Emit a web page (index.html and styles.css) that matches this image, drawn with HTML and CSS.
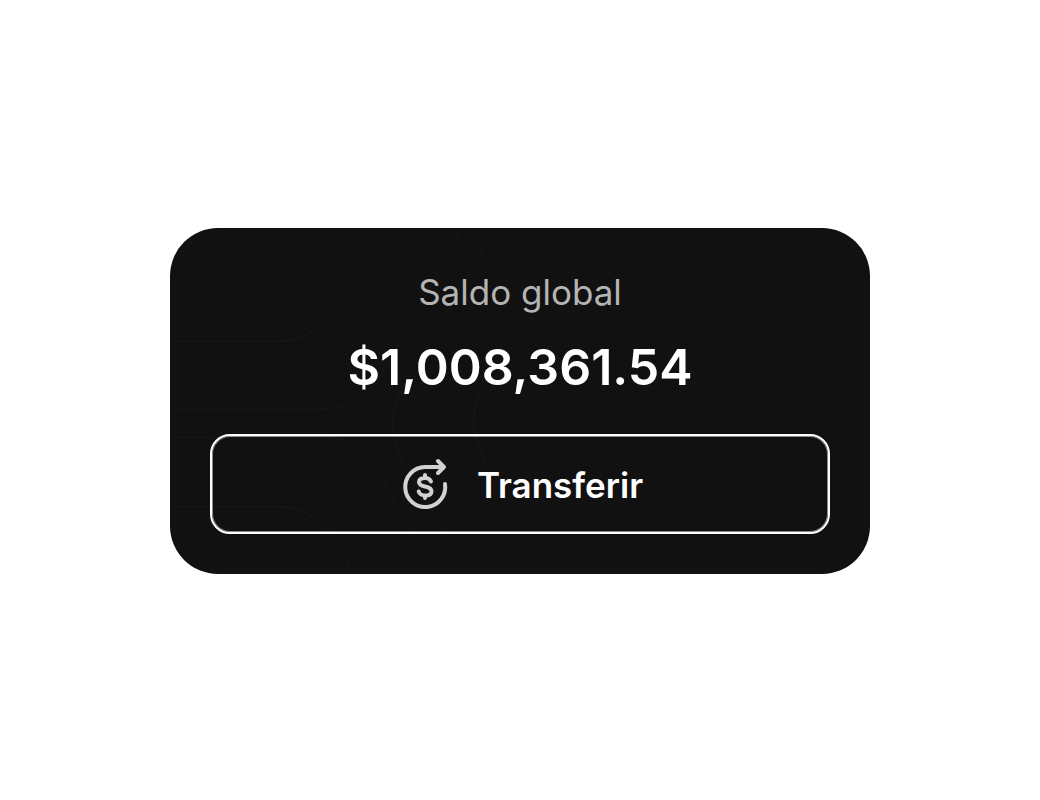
FILE: index.html
```html
<!DOCTYPE html>
<html lang="es">
<head>
<meta charset="utf-8">
<meta name="viewport" content="width=device-width, initial-scale=1">
<title>Saldo global</title>
<link rel="stylesheet" href="styles.css">
</head>
<body>
<main class="page">
  <section class="card" aria-labelledby="balance-label">
    <svg class="card-pattern" viewBox="0 0 700 346" preserveAspectRatio="xMinYMin slice" aria-hidden="true">
      <path d="M2 113H110C137 113 155 95 166 78L205 12"/>
      <path d="M2 181H150C181 181 202 164 216 139L291 2"/>
      <path d="M317 15L232 162Q214 195 232 232L292 336"/>
      <path d="M312 160Q293 198 318 239"/>
      <path d="M2 209H153C180 209 198 226 210 247L263 342"/>
      <path d="M2 279H112C138 279 155 297 166 315L182 342"/>
    </svg>
    <h1 class="label" id="balance-label">Saldo global</h1>
    <p class="amount">$1,008,361.54</p>
    <button class="transfer" type="button">
      <svg class="transfer-icon" viewBox="0 0 56 56" aria-hidden="true">
        <path d="M48 27A20 20 0 1 1 28 10H47M41 4L47 10L41 16"/>
        <path d="M34 24.500C33 22 31 21 28 21C24.500 21 22 22.300 22 25C22 27.700 24.500 28.700 28 29.500C31.500 30.300 34.500 31.300 34.500 34.200C34.500 37.300 31.500 38.500 28.300 38.500C25 38.500 22.500 37 21.700 34.500M28 18V21M28 38.500V41"/>
      </svg>
      <span>Transferir</span>
    </button>
  </section>
</main>
</body>
</html>
```
FILE: styles.css
```css
* {
  box-sizing: border-box;
}

body {
  margin: 0;
  background: #fff;
  font-family: Inter, "Liberation Sans", sans-serif;
}

.page {
  display: flex;
  align-items: center;
  justify-content: center;
  min-height: 100vh;
  padding: 26px 24px 24px;
}

.card {
  position: relative;
  display: flex;
  flex-direction: column;
  align-items: center;
  width: 100%;
  max-width: 700px;
  padding: 40px;
  overflow: hidden;
  border-radius: 48px;
  background: #111;
  color: #fff;
}

.card-pattern {
  position: absolute;
  inset: 0;
  width: 100%;
  height: 100%;
  fill: none;
  stroke: #191919;
  stroke-width: 1;
}

.label,
.amount,
.transfer {
  position: relative;
}

.label {
  margin: 0;
  color: #b4b4b4;
  font-size: 35px;
  font-weight: 400;
  line-height: 48px;
}

.amount {
  margin: 16px 0 32px;
  font-size: 50px;
  font-weight: 600;
  line-height: 70px;
}

.transfer {
  display: flex;
  align-items: center;
  justify-content: center;
  gap: 24px;
  width: 100%;
  min-height: 100px;
  padding: 18px 16px 16px;
  border: 2px solid #fff;
  border-radius: 20px;
  background: transparent;
  box-shadow: inset 0 0 0 1px #888;
  color: #fff;
  font: 600 35px/48px Inter, "Liberation Sans", sans-serif;
  cursor: pointer;
}

.transfer-icon {
  width: 56px;
  height: 56px;
  fill: none;
  stroke: #d2d2d2;
  stroke-width: 4;
  stroke-linecap: round;
  stroke-linejoin: round;
}
```
